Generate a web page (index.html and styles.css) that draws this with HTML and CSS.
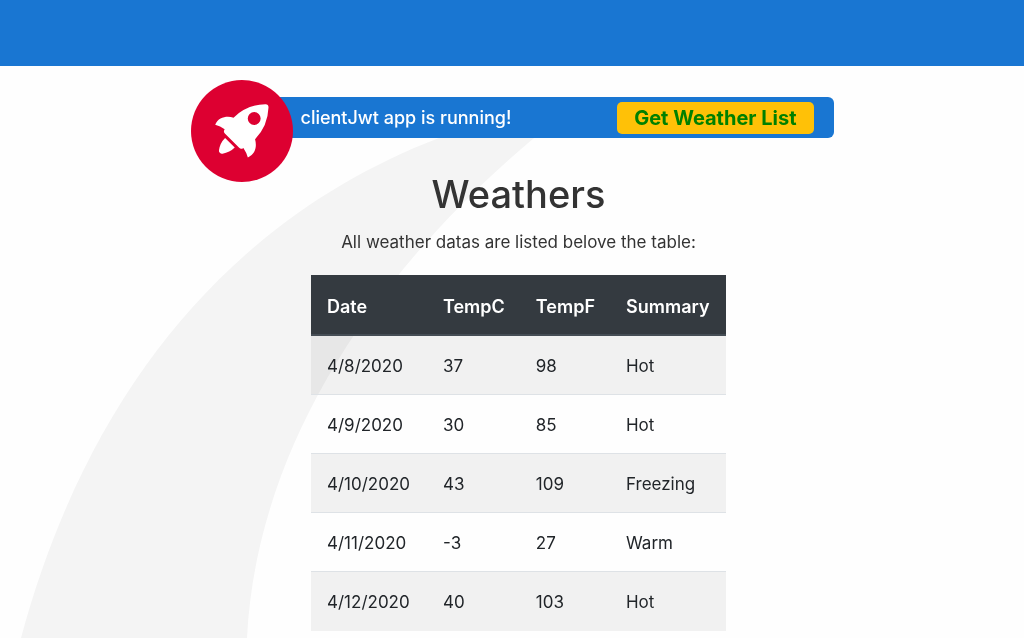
FILE: index.html
```html
<!DOCTYPE html>
<html lang="en">
<head>
<meta charset="utf-8">
<meta name="viewport" content="width=device-width, initial-scale=1">
<title>ClientJwt</title>
<link rel="stylesheet" href="styles.css">
</head>
<body>
<svg class="smoke" viewBox="0 0 1024 638" preserveAspectRatio="xMidYMin slice" aria-hidden="true">
  <path d="M534 138C365 280 256 455 247 638L21 638C92 375 245 212 439 138L480 120L560 117Z" fill="#f4f4f4"/>
</svg>
<header class="toolbar"></header>
<main class="content">
  <section class="banner">
    <svg class="rocket" viewBox="0 0 102 102" role="img" aria-label="Rocket Ship">
      <circle cx="51" cy="51" r="51" fill="#dd0031"/>
      <g transform="translate(24.2 24.2)" fill="#fff">
        <path d="M3.4,42.615a3.084,3.084,0,0,0,3.553,3.553,21.419,21.419,0,0,0,12.215-6.107L9.511,30.4A21.419,21.419,0,0,0,3.4,42.615Z" transform="translate(0.371 3.363)"/>
        <path d="M53.3,3.221A3.09,3.09,0,0,0,50.081,0,48.227,48.227,0,0,0,18.322,13.437c-6-1.666-14.991-1.221-18.322,7.218A33.892,33.892,0,0,1,9.439,25.1l-.333.666a3.013,3.013,0,0,0,.555,3.553L23.985,43.641a2.9,2.9,0,0,0,3.553.555l.666-.333A33.892,33.892,0,0,1,32.647,53.3c8.55-3.664,8.884-12.326,7.218-18.322A48.227,48.227,0,0,0,53.3,3.221ZM34.424,9.772a6.439,6.439,0,1,1,9.106,9.106,6.368,6.368,0,0,1-9.106,0A6.467,6.467,0,0,1,34.424,9.772Z"/>
      </g>
    </svg>
    <div class="banner-bar">
      <span class="banner-text">clientJwt app is running!</span>
      <button class="get-list" type="button">Get Weather List</button>
    </div>
  </section>
  <section class="weathers">
    <h1 class="title">Weathers</h1>
    <p class="subtitle">All weather datas are listed belove the table:</p>
    <table class="table">
      <colgroup><col class="col-wide"><col><col><col class="col-wide"></colgroup>
      <thead>
        <tr><th scope="col">Date</th><th scope="col">TempC</th><th scope="col">TempF</th><th scope="col">Summary</th></tr>
      </thead>
      <tbody>
        <tr><td>4/8/2020</td><td>37</td><td>98</td><td>Hot</td></tr>
        <tr><td>4/9/2020</td><td>30</td><td>85</td><td>Hot</td></tr>
        <tr><td>4/10/2020</td><td>43</td><td>109</td><td>Freezing</td></tr>
        <tr><td>4/11/2020</td><td>-3</td><td>27</td><td>Warm</td></tr>
        <tr><td>4/12/2020</td><td>40</td><td>103</td><td>Hot</td></tr>
      </tbody>
    </table>
  </section>
</main>
</body>
</html>
```
FILE: styles.css
```css
* {
  box-sizing: border-box;
}

body {
  margin: 0;
  background: #fefefe;
  color: #333;
  font-family: Inter, "Liberation Sans", sans-serif;
  font-size: 17px;
  line-height: 26px;
}

.smoke {
  position: fixed;
  top: 0;
  left: 0;
  width: 100%;
  height: 100%;
  z-index: -1;
}

.toolbar {
  height: 66px;
  background: #1976d2;
}

.content {
  display: flex;
  flex-direction: column;
  align-items: center;
  padding: 14px 16px 0;
}

.banner {
  display: flex;
  align-items: flex-start;
  width: 100%;
  max-width: 643px;
}

.rocket {
  flex: none;
  width: 102px;
  z-index: 1;
}

.banner-bar {
  display: flex;
  flex: 1;
  align-items: center;
  justify-content: space-between;
  height: 41px;
  margin: 17px 0 0 -24px;
  padding: 0 20px 0 32px;
  border-radius: 6px;
  background: #1976d2;
}

.banner-text {
  color: #fff;
  font-size: 18px;
  font-weight: 500;
}

.get-list {
  padding: 0 17px;
  border: 0;
  border-radius: 5px;
  background: #ffc107;
  color: #008000;
  font: 700 20px/32px Inter, "Liberation Sans", sans-serif;
}

.weathers {
  display: flex;
  flex-direction: column;
  align-items: center;
  margin-top: -12px;
  padding-left: 13px;
}

.title {
  margin: 0 0 11px;
  font-size: 38px;
  font-weight: 500;
  line-height: 48px;
}

.subtitle {
  margin: 0 0 20px;
}

.table {
  border-collapse: collapse;
  color: #212529;
  text-align: left;
}

.col-wide {
  width: 116px;
}

.table th,
.table td {
  height: 59px;
  padding: 17px 15px 15px 16px;
}

.table th {
  height: 60px;
  padding-top: 18px;
  padding-bottom: 14px;
  border-bottom: 2px solid #454d55;
  background: #343a40;
  color: #fff;
  font-size: 18px;
  font-weight: 600;
}

.table tbody tr + tr {
  border-top: 1px solid #dee2e6;
}

.table tbody tr:nth-child(odd) {
  background: rgba(0, 0, 0, 0.05);
}
```
